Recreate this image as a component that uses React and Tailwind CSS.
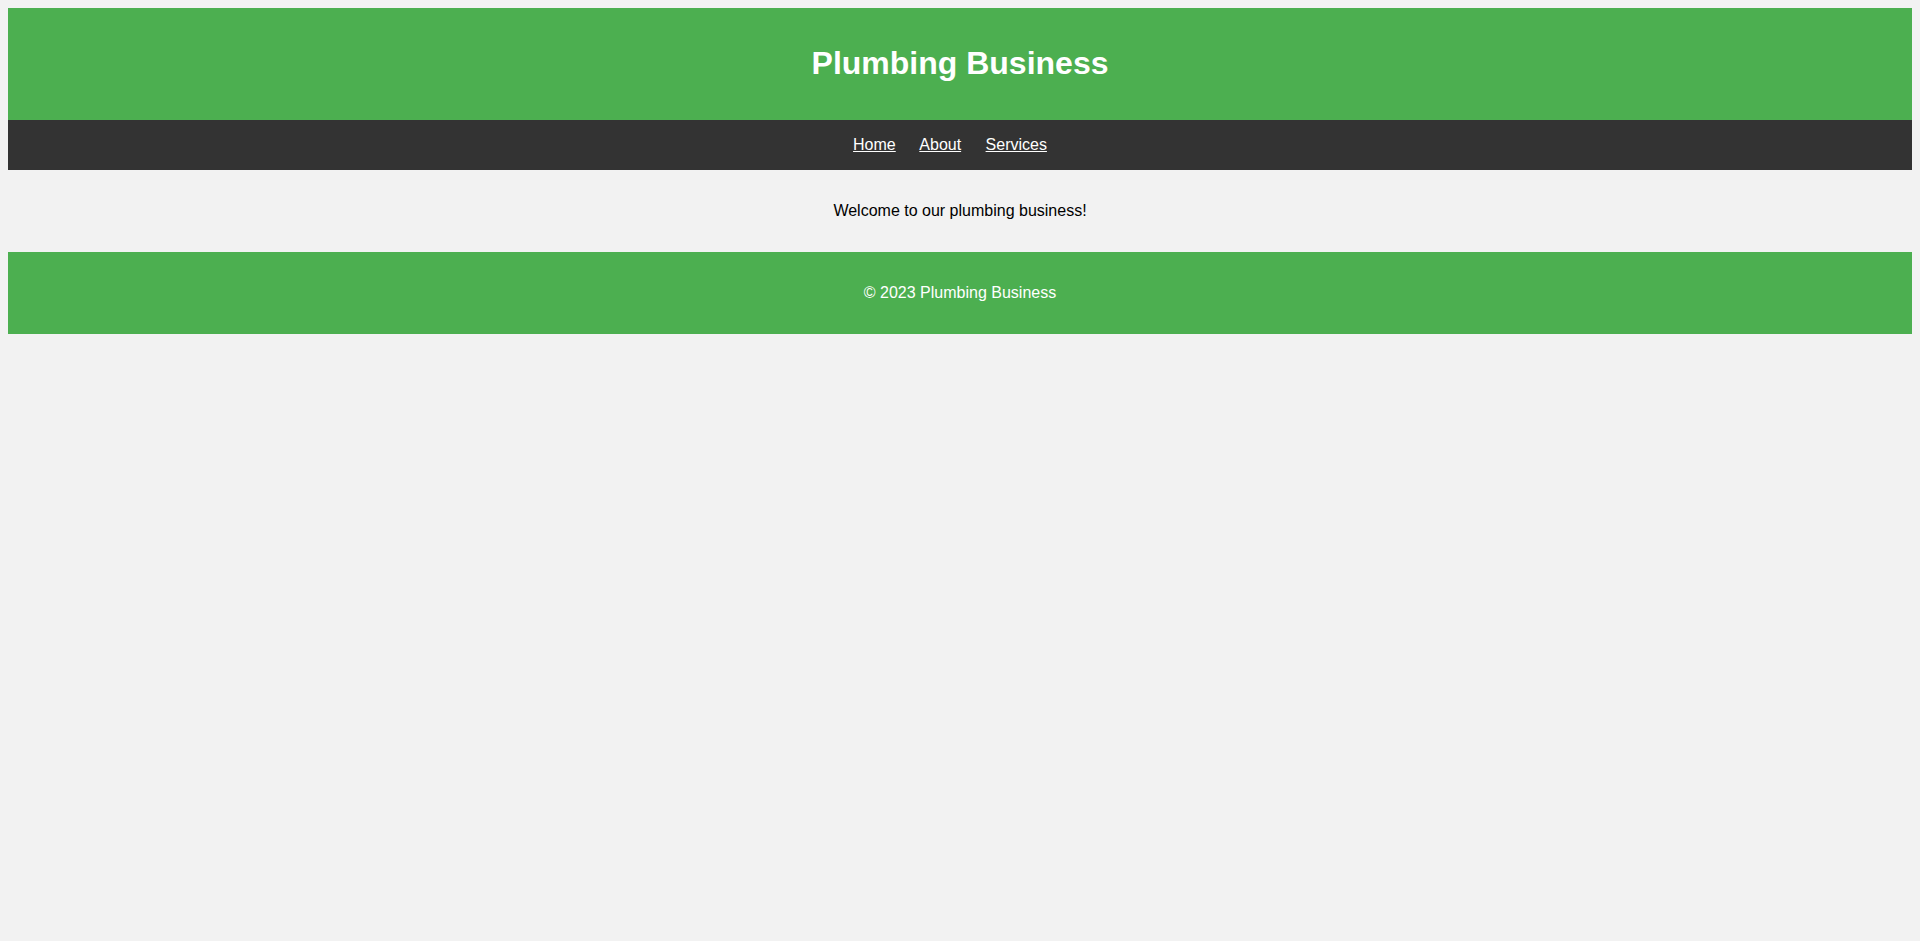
import React from 'react';

const links = ['Home', 'About', 'Services'];

export default function App() {
  return (
    <div className="min-h-[941px] bg-[#f2f2f2] p-2 font-['Liberation_Sans',Arial,sans-serif] text-base text-black">
      <header className="bg-[#4caf50] p-4 text-center text-white">
        <h1 className="my-[21.44px] text-[32px] font-bold leading-[37px]">Plumbing Business</h1>
      </header>
      <nav className="bg-[#333333] p-4 text-center leading-[18px]">
        {links.map((l) => (
          <React.Fragment key={l}>
            <a href="#" className="mr-5 text-white underline">{l}</a>{' '}
          </React.Fragment>
        ))}
      </nav>
      <main className="p-4 text-center">
        <p className="my-4 leading-[18px]">Welcome to our plumbing business!</p>
      </main>
      <footer className="bg-[#4caf50] p-4 text-center text-white">
        <p className="my-4 leading-[18px]">© 2023 Plumbing Business</p>
      </footer>
    </div>
  );
}
